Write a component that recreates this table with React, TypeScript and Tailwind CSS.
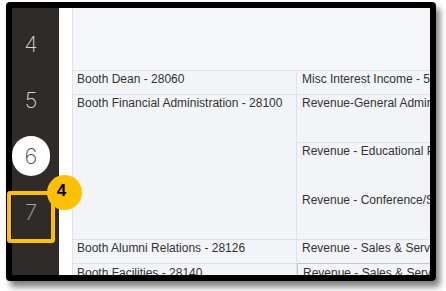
import type { ReactNode } from 'react'

// номера шагов слева
const STEPS = ['4', '5', '6', '7']

function Cell({ children, className = '' }: { children?: ReactNode; className?: string }) {
  return <div className={'whitespace-nowrap overflow-hidden ' + className}>{children}</div>
}

function StepRail() {
  return (
    <nav className="w-[47px] shrink-0 bg-[#2f2b28] flex flex-col items-center pt-[8px] pr-[9px]">
      {STEPS.map(s => (
        <div key={s} className="h-[56px] w-full flex items-center justify-center">
          {s === '6' ? (
            <div className="w-[40px] h-[40px] rounded-full bg-white flex items-center justify-center text-[22px] font-extralight text-[#4a4a4a]">
              {s}
            </div>
          ) : (
            <span className={'text-[22px] font-extralight ' + (s === '7' ? 'text-[#a3a3a3]' : 'text-[#d2d2d2]')}>{s}</span>
          )}
        </div>
      ))}
    </nav>
  )
}

function CostTable() {
  return (
    <div
      className="flex-1 min-w-0 bg-[#f2f4f8] border-l border-[#dde3ea] text-[12px] leading-[16px] text-[#333]"
      style={{ fontFamily: '"Liberation Sans", Arial, sans-serif' }}
    >
      <div className="h-[63px] bg-[#f5f6fa] border-b border-[#dde3ea]" />

      <div className="flex h-[24px] border-b border-[#dde3ea]">
        <Cell className="w-[223px] shrink-0 pl-[4px]">Booth Dean - 28060</Cell>
        <Cell className="flex-1 border-l border-[#dde3ea] pl-[5px]">Misc Interest Income - 52080</Cell>
      </div>

      <div className="flex h-[145px] border-b border-[#dde3ea]">
        <Cell className="w-[223px] shrink-0 pl-[4px]">Booth Financial Administration - 28100</Cell>
        <div className="flex-1 min-w-0 border-l border-[#dde3ea] flex flex-col">
          <Cell className="h-[48px] shrink-0 border-b border-[#dde3ea] pl-[5px]">Revenue-General Administration</Cell>
          <div className="flex-1 flex flex-col gap-[33px] pl-[5px] whitespace-nowrap overflow-hidden">
            <span>Revenue - Educational Programs</span>
            <span>Revenue - Conference/Seminars</span>
          </div>
        </div>
      </div>

      <div className="flex h-[24px] border-b border-[#dde3ea]">
        <Cell className="w-[223px] shrink-0 pl-[4px]">Booth Alumni Relations - 28126</Cell>
        <Cell className="flex-1 border-l border-[#dde3ea] pl-[5px]">Revenue - Sales &amp; Services</Cell>
      </div>

      <div className="flex h-[24px]">
        <Cell className="w-[223px] shrink-0 pl-[4px] pt-[1px]">Booth Facilities - 28140</Cell>
        <div className="flex-1 min-w-0 border-l border-[#dde3ea]">
          <Cell className="h-full border-t border-l border-[#c3c7cc] -mt-[1px] pl-[5px] pt-[1px]">Revenue - Sales &amp; Services</Cell>
        </div>
      </div>
    </div>
  )
}

export default function App() {
  return (
    <div
      className="relative w-[446px] h-[291px] bg-white overflow-hidden"
      style={{ fontFamily: 'Inter, "Open Sans", sans-serif' }}
    >
      <div className="ml-[6px] mt-[2px] w-[430px] h-[279px] rounded-[4px] border-[6px] border-black overflow-hidden flex shadow-[4px_6px_6px_rgba(0,0,0,0.5)]">
        <StepRail />
        <div className="w-[13px] shrink-0 bg-white" />
        <CostTable />
      </div>

      {/* выноска: рамка вокруг шага 7 и жёлтый номер */}
      <div className="absolute left-[7px] top-[191px] w-[48px] h-[52px] rounded-[3px] border-[4px] border-[#ffc000]" />
      <div
        className="absolute left-[47px] top-[175px] w-[35px] h-[35px] rounded-full bg-[#ffc000] flex items-center justify-center text-[17px] font-bold text-black pr-[6px] pb-[3px]"
        style={{ fontFamily: '"Liberation Sans", Arial, sans-serif' }}
      >
        4
      </div>
    </div>
  )
}
